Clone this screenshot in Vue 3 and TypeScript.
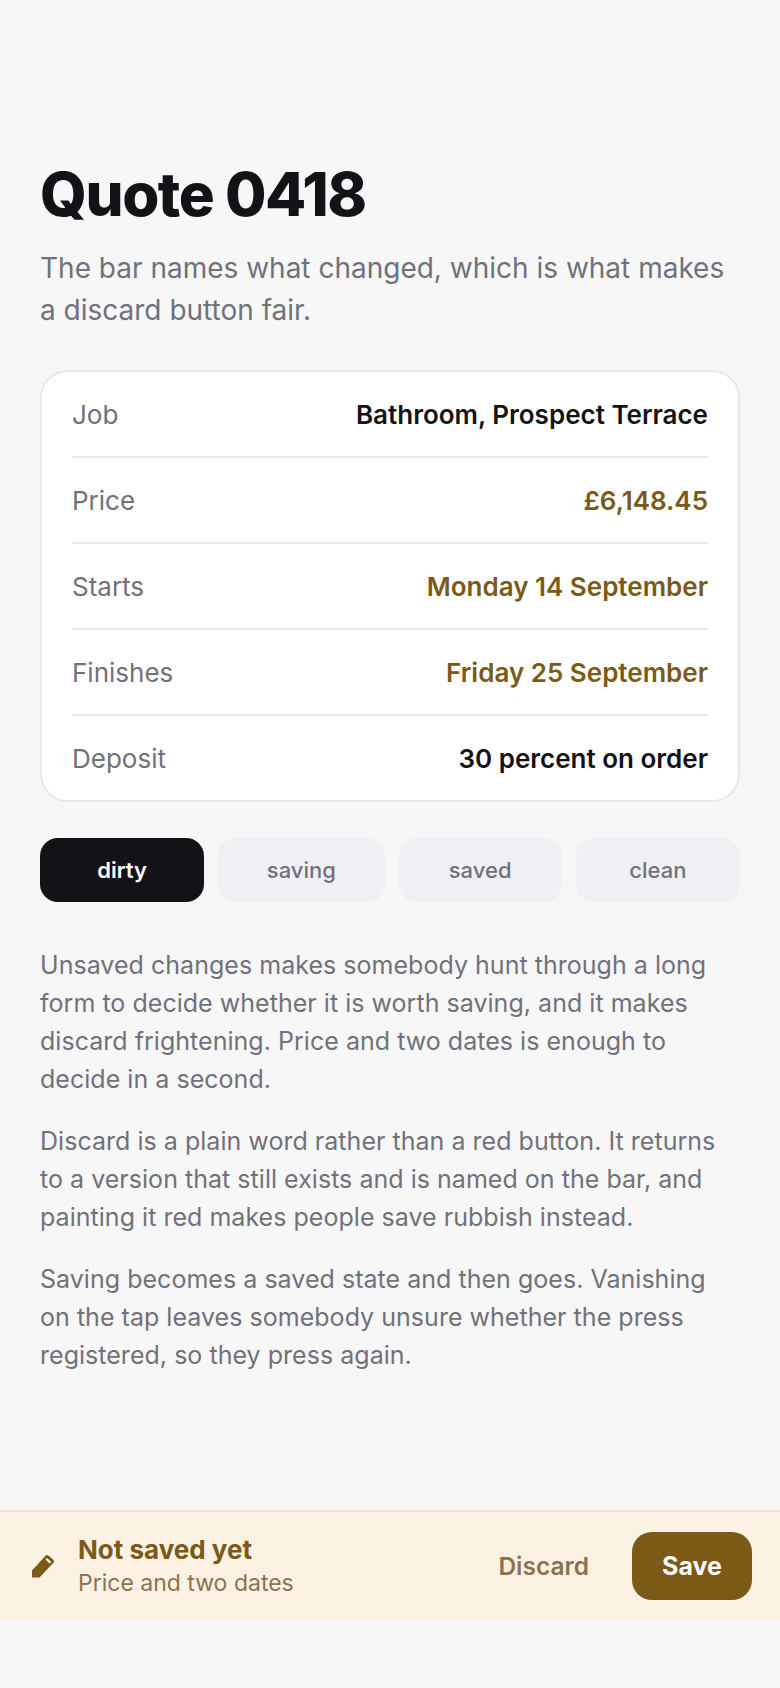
<script setup lang="ts">
const rows = [
  { label: 'Job', value: 'Bathroom, Prospect Terrace', changed: false },
  { label: 'Price', value: '£6,148.45', changed: true },
  { label: 'Starts', value: 'Monday 14 September', changed: true },
  { label: 'Finishes', value: 'Friday 25 September', changed: true },
  { label: 'Deposit', value: '30 percent on order', changed: false }
];

const states = ['dirty', 'saving', 'saved', 'clean'];
const active = 'dirty';

const notes = [
  'Unsaved changes makes somebody hunt through a long form to decide whether it is worth saving, and it makes discard frightening. Price and two dates is enough to decide in a second.',
  'Discard is a plain word rather than a red button. It returns to a version that still exists and is named on the bar, and painting it red makes people save rubbish instead.',
  'Saving becomes a saved state and then goes. Vanishing on the tap leaves somebody unsure whether the press registered, so they press again.'
];
</script>

<template>
  <div class="page">
    <main class="content">
      <h1 class="title">Quote 0418</h1>
      <p class="lead">The bar names what changed, which is what makes a discard button fair.</p>

      <section class="card">
        <div v-for="row in rows" :key="row.label" class="row">
          <span class="label">{{ row.label }}</span>
          <span class="value" :class="{ changed: row.changed }">{{ row.value }}</span>
        </div>
      </section>

      <div class="states">
        <button v-for="state in states" :key="state" class="state" :class="{ active: state === active }">
          {{ state }}
        </button>
      </div>

      <div class="notes">
        <p v-for="note in notes" :key="note" class="note">{{ note }}</p>
      </div>
    </main>

    <footer class="bar">
      <svg class="pencil" width="24" height="24" viewBox="0 0 24 24" aria-hidden="true">
        <path d="M1 23.5V16.5L14.5 1.8C15.3 0.9 16.5 0.8 17.4 1.6L22.3 5.8C23.2 6.6 23.3 7.8 22.5 8.7L8.5 23.5Z" fill="#7a5a16" />
        <path d="M16 4L20.2 7.7L18.7 9.4L14.5 5.7Z" fill="#fcf2e3" />
      </svg>
      <div class="bar-text">
        <strong class="bar-title">Not saved yet</strong>
        <span class="bar-sub">Price and two dates</span>
      </div>
      <button class="discard">Discard</button>
      <button class="save">Save</button>
    </footer>
  </div>
</template>

<style>
body {
  margin: 0;
  background: #f7f7f8;
}
</style>

<style scoped>
.page {
  min-height: 1688px;
  background: #f7f7f8;
  font-family: Inter, "Liberation Sans", sans-serif;
  color: #131317;
}

button {
  font-family: inherit;
}

.content {
  padding: 160px 40px 0;
}

.title {
  margin: 0;
  font-size: 60px;
  line-height: 68px;
  font-weight: 800;
  letter-spacing: -0.024em;
}

.lead {
  margin: 19px 0 0;
  font-size: 28px;
  line-height: 42px;
  color: #71717a;
}

.card {
  margin-top: 39px;
  padding: 0 30px;
  background: #fff;
  border: 2px solid #e8e8ea;
  border-radius: 28px;
}

.row {
  display: flex;
  justify-content: space-between;
  align-items: center;
  height: 83px;
  padding-top: 1px;
  border-bottom: 2px solid #e8e8ea;
  font-size: 26px;
}

.row:last-child {
  border-bottom: 0;
}

.label {
  color: #71717a;
}

.value {
  font-weight: 600;
}

.changed {
  color: #7a5a16;
}

.states {
  display: grid;
  grid-template-columns: 164fr 166fr 163fr 164fr;
  gap: 14px;
  margin-top: 36px;
}

.state {
  height: 64px;
  padding: 0;
  border: 0;
  border-radius: 18px;
  background: #f0f0f4;
  color: #71717a;
  font-size: 22px;
  font-weight: 500;
}

.state.active {
  background: #131317;
  color: #fff;
  font-weight: 600;
}

.notes {
  margin-top: 44px;
}

.note {
  margin: 0 0 24px;
  font-size: 25px;
  line-height: 38px;
  letter-spacing: 0.03px;
  color: #71717a;
}

.bar {
  display: flex;
  align-items: center;
  box-sizing: border-box;
  height: 110px;
  margin-top: 136px;
  padding: 0 28px 0 31px;
  background: #fcf2e3;
  border-top: 2px solid #f2e3c6;
}

.pencil {
  flex: none;
}

.bar-text {
  display: flex;
  flex-direction: column;
  flex: 1;
  margin-left: 23px;
}

.bar-title {
  font-size: 26px;
  line-height: 34px;
  font-weight: 700;
  color: #7a5a16;
}

.bar-sub {
  font-size: 23px;
  line-height: 32px;
  color: #8a7350;
}

.discard {
  padding: 0;
  margin-right: 43px;
  border: 0;
  background: transparent;
  color: #8a7350;
  font-size: 24.5px;
  font-weight: 600;
}

.save {
  width: 120px;
  height: 68px;
  padding: 0;
  border: 0;
  border-radius: 20px;
  background: #7a5a16;
  color: #fff;
  font-size: 25px;
  font-weight: 700;
}
</style>
